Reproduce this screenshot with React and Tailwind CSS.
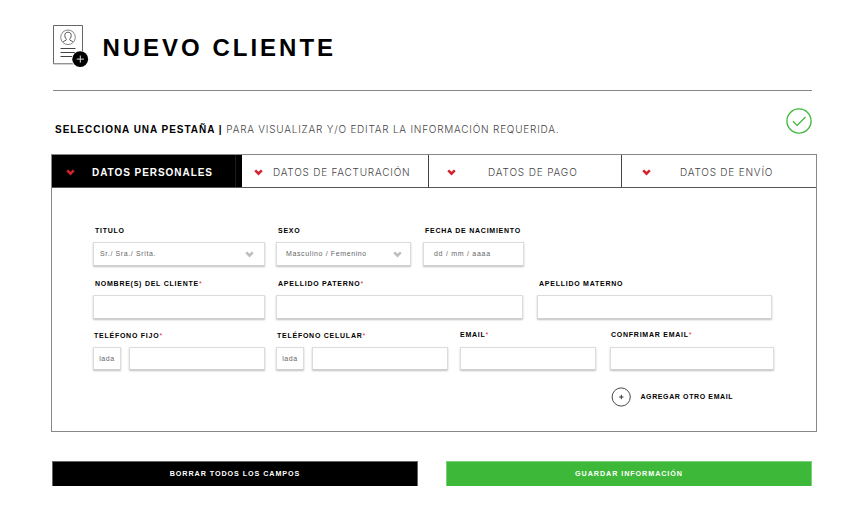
function Chevron({ className }) {
  return (
    <svg viewBox="0 0 9 7" className={`h-[7px] w-[9px] shrink-0 ${className}`}>
      <path d="M.3 2.2 2.1.5 4.5 2.7 6.9.5l1.8 1.7L4.5 6.5Z" fill="currentColor" />
    </svg>
  );
}

function Field({ label, required, className = "", labelClass = "pt-px pl-0.5", height = "h-6", children }) {
  return (
    <div className={className}>
      <div className={`h-3 text-[7px] leading-3 font-bold tracking-[0.75px] whitespace-nowrap text-black ${labelClass}`}>
        {label}
        {required && <span className="font-normal text-[#d9303a]">*</span>}
      </div>
      <div className={`mt-[6px] flex gap-2 ${height}`}>{children}</div>
    </div>
  );
}

function Box({ className = "w-full", children }) {
  return (
    <div className={`flex h-full items-center rounded-[1px] border border-[#dcdcdc] border-b-[#cfcfcf] bg-white text-[7px] tracking-[0.62px] whitespace-nowrap text-[#666] shadow-[0_1px_2px_rgba(0,0,0,0.25)] ${className}`}>
      {children}
    </div>
  );
}

function ClientIcon() {
  return (
    <svg viewBox="0 0 37 44" className="h-11 w-[37px] shrink-0" fill="none">
      <path d="M.5.5h29v38.3H.5Z" stroke="#666" strokeWidth="1" />
      <circle cx="15" cy="12.3" r="7.3" stroke="#666" strokeWidth=".8" />
      <path d="M10 17c.4-1.2 3.4-1.1 3.4-2.5 0-.7-1.6-1.6-1.6-4 0-2.2 1.3-3.3 3.2-3.3s3.2 1.1 3.2 3.3c0 2.4-1.6 3.3-1.6 4 0 1.4 3 1.3 3.4 2.5" stroke="#444" strokeWidth=".9" />
      <path d="M7.5 23.5h15M7.5 27.5h15M7.5 31.5h12" stroke="#444" strokeWidth="1" />
      <circle cx="27.2" cy="34.2" r="8.6" fill="#fff" />
      <circle cx="27.2" cy="34.2" r="7.9" fill="#000" />
      <path d="M27.3 30.5v7.2M23.7 34.1h7.2" stroke="#ddd" strokeWidth="1" />
    </svg>
  );
}

const light = "font-['Inter','Liberation_Sans',sans-serif] font-light text-[#444]";

export default function App() {
  return (
    <div className="h-[524px] w-[865px] overflow-hidden bg-white pt-[25px] font-['Liberation_Sans',Arial,sans-serif]">
      <header className="mr-[53px] ml-[53px] flex h-[66px] border-b border-[#888]">
        <ClientIcon />
        <h1 className="ml-[12.4px] pt-[7px] text-[24px] leading-8 font-bold tracking-[3px] whitespace-nowrap">NUEVO CLIENTE</h1>
      </header>

      <div className="mr-[53px] ml-[55px] flex h-[63px] items-start justify-between">
        <p className="flex pt-[31px] text-[10px] leading-4 whitespace-pre">
          <span className="font-bold tracking-[0.97px]">SELECCIONA UNA PESTAÑA | </span>
          <span className={`-mt-px tracking-[0.77px] ${light}`}>PARA VISUALIZAR Y/O EDITAR LA INFORMACIÓN REQUERIDA.</span>
        </p>
        <svg viewBox="0 0 26 26" className="mt-[17px] h-[26px] w-[26px]" fill="none" stroke="#3db839">
          <circle cx="13" cy="13" r="12.1" strokeWidth="1.3" />
          <path d="m7 13.2 4.1 4.2L19.5 9" strokeWidth="1.3" />
        </svg>
      </div>

      <main className="ml-[51px] h-[278px] w-[766px] border border-[#888]">
        <nav className="flex h-[33px] border-b border-[#555] text-[10px]">
          <div className="flex w-[190px] items-center bg-black text-white">
            <Chevron className="mt-0.5 ml-[14px] text-[#d2232f]" />
            <span className="ml-[17px] w-[143px] pt-0.5 font-bold tracking-[0.95px] whitespace-nowrap">DATOS PERSONALES</span>
            <span className="h-full w-px bg-[#1c1c1c]" />
          </div>
          <div className="flex w-[187px] items-center border-r border-[#444]">
            <Chevron className="mt-0.5 ml-[12px] text-[#d2232f]" />
            <span className={`ml-[10px] pt-0.5 tracking-[0.78px] whitespace-nowrap ${light}`}>DATOS DE FACTURACIÓN</span>
          </div>
          <div className="flex w-[193px] items-center border-r border-[#444]">
            <Chevron className="mt-0.5 ml-[18px] text-[#d2232f]" />
            <span className={`ml-[32px] pt-0.5 tracking-[0.85px] whitespace-nowrap ${light}`}>DATOS DE PAGO</span>
          </div>
          <div className="flex items-center">
            <Chevron className="mt-0.5 ml-[20px] text-[#d2232f]" />
            <span className={`ml-[29px] pt-0.5 tracking-[0.8px] whitespace-nowrap ${light}`}>DATOS DE ENVÍO</span>
          </div>
        </nav>

        <form className="pt-[36px] pl-[41px]">
          <div className="flex">
            <Field label="TITULO" className="w-[172px]">
              <Box className="w-full justify-between pr-[10px] pl-[6px]">Sr./ Sra./ Srita.<Chevron className="mt-px text-[#bdbdbd]" /></Box>
            </Field>
            <Field label="SEXO" className="ml-[11px] w-[135px]">
              <Box className="w-full justify-between pr-[8px] pl-[9px]">Masculino / Femenino<Chevron className="mt-px text-[#bdbdbd]" /></Box>
            </Field>
            <Field label="FECHA DE NACIMIENTO" className="ml-[12px] w-[101px]">
              <Box className="w-full pl-[10px]"><span className="tracking-[0.72px]">dd / mm / aaaa</span></Box>
            </Field>
          </div>

          <div className="mt-[11px] flex">
            <Field label="NOMBRE(S) DEL CLIENTE" required className="w-[172px]"><Box /></Field>
            <Field label="APELLIDO PATERNO" required className="ml-[11px] w-[247px]"><Box /></Field>
            <Field label="APELLIDO MATERNO" className="ml-[14px] w-[235px]"><Box /></Field>
          </div>

          <div className="mt-[10px] flex">
            <Field label="TELÉFONO FIJO" required labelClass="pt-px pl-px" height="h-[23px]" className="w-[172px]">
              <Box className="w-7 shrink-0 justify-center pt-0.5">lada</Box>
              <Box />
            </Field>
            <Field label="TELÉFONO CELULAR" required labelClass="pt-px pl-px" height="h-[23px]" className="ml-[11px] w-[172px]">
              <Box className="w-7 shrink-0 justify-center pt-0.5">lada</Box>
              <Box />
            </Field>
            <Field label="EMAIL" required labelClass="" height="h-[23px]" className="ml-[12px] w-[136px]"><Box /></Field>
            <Field label="CONFRIMAR EMAIL" required labelClass="pl-px" height="h-[23px]" className="ml-[14px] w-[164px]"><Box /></Field>
          </div>

          <div className="mt-[17px] ml-[518px] flex items-center text-[7px] font-bold tracking-[0.62px] whitespace-nowrap">
            <svg viewBox="0 0 20 20" className="mr-[9.4px] h-5 w-5" fill="none" stroke="#333">
              <circle cx="10.2" cy="10" r="9.1" strokeWidth=".9" />
              <path d="M10.3 7.8v4.4M8.1 10h4.4" strokeWidth="1" />
            </svg>
            <span className="pt-px">AGREGAR OTRO EMAIL</span>
          </div>
        </form>
      </main>

      <div className="mt-[29px] ml-[52px] flex gap-7 text-[7.2px] font-bold text-white">
        <button className="h-[25px] w-[366px] border border-b-0 border-[#666] bg-black pt-px tracking-[0.93px]">BORRAR TODOS LOS CAMPOS</button>
        <button className="h-[25px] w-[366px] border border-b-0 border-[#7dd07a] bg-[#3db839] pt-px tracking-[0.93px]">GUARDAR INFORMACIÓN</button>
      </div>
    </div>
  );
}
